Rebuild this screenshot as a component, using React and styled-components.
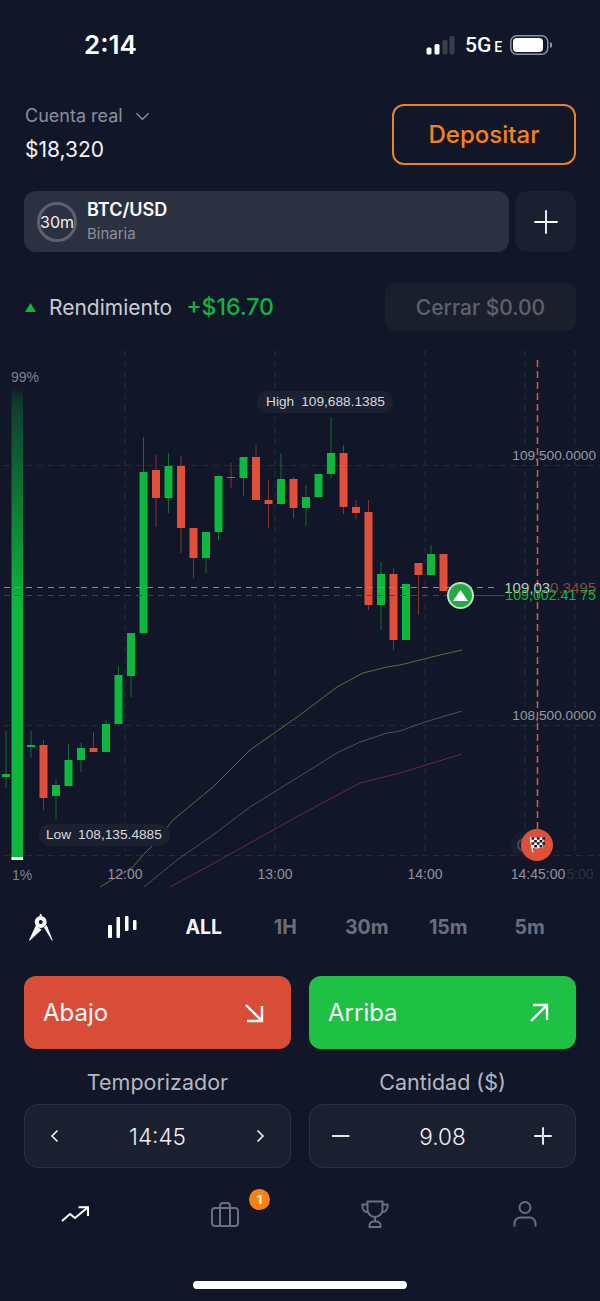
import React from 'react';
import styled, {createGlobalStyle} from 'styled-components';

const UP = '#0db83c';
const DOWN = '#df4f39';

// x, open-top, body-bottom, wick-top, wick-bottom, colour flag
const candles = [
    [6, 774, 777, 731, 788, 1], [31, 745, 747, 731, 758, 1], [43.5, 745, 798, 740, 810, 0],
    [56, 785, 796, 780, 819, 1], [68.5, 760, 786, 744, 786, 1], [81, 748, 760, 743, 772, 1],
    [93.5, 748, 752, 732, 752, 0], [106, 724, 752, 720, 752, 1], [118.5, 675, 724, 666, 724, 1],
    [131, 633, 676, 633, 697, 1], [143.5, 472, 633, 437, 633, 1], [156, 470, 498, 455, 527, 0],
    [168.5, 466, 498, 453, 513, 1], [181, 466, 528, 456, 553, 0], [193.5, 528, 558, 528, 578, 0],
    [206, 532, 558, 532, 573, 1], [218.5, 476, 532, 476, 540, 1], [231, 477, 478, 463, 488, 0],
    [243.5, 457, 478, 457, 496, 1], [256, 457, 500, 445, 500, 0], [268.5, 500, 504, 480, 528, 0],
    [281, 479, 504, 453, 504, 1], [293.5, 479, 508, 477, 518, 0], [306, 497, 508, 485, 526, 1],
    [318.5, 474, 497, 474, 497, 1], [331, 453, 474, 417, 479, 1], [343.5, 453, 507, 445, 514, 0],
    [356, 507, 513, 500, 519, 0], [368.5, 512, 605, 500, 610, 0], [381, 574, 605, 562, 630, 1],
    [393.5, 574, 640, 568, 650, 0], [406, 584, 640, 584, 640, 1], [418.5, 563, 575, 563, 615, 0],
    [431, 554, 575, 545, 575, 1], [443.5, 554, 591, 554, 591, 0],
];

const yellowLine = '100,887 133,867 143,855 152,846 173,820 213,787 250,750 300,715 337,687 363,673 387,667 400,665 440,655 462,650';
const grayLine = '144,887 177,860 213,835 250,807 300,776 337,753 360,742 387,733 400,731 425,722 462,711';
const redLine = '170,887 207,867 300,815 360,783 400,773 462,754';

const GlobalStyle = createGlobalStyle`
    html, body {
        margin: 0;
        padding: 0;
        background: #111729;
    }
    body {
        font-family: Inter, "Noto Sans", sans-serif;
        color: #fff;
    }
`;

const Page = styled.div`
    width: 600px;
    height: 1301px;
    overflow: hidden;
    background: #111729;
`;

const StatusBar = styled.div`
    height: 104px;
    box-sizing: border-box;
    display: flex;
    justify-content: space-between;
    padding: 30px 47px 0 84px;
`;

const Clock = styled.div`
    font-size: 26px;
    font-weight: 600;
    line-height: 30px;
`;

const StatusIcons = styled.div`
    display: flex;
    align-items: center;
    height: 30px;
`;

const Network = styled.div`
    font-family: Roboto, sans-serif;
    font-size: 21px;
    font-weight: 500;
    margin: 0 9px 0 10px;
    width: 36px;
    display: flex;
    align-items: baseline;
    small {
        font-size: 14px;
        margin-left: 3px;
    }
`;

const HeaderRow = styled.div`
    display: flex;
    justify-content: space-between;
    padding: 0 24px;
    height: 61px;
`;

const Account = styled.div`
    display: flex;
    flex-direction: column;
    padding-left: 1px;
`;

const AccountName = styled.div`
    font-size: 18px;
    line-height: 24px;
    color: #8b8f99;
    display: flex;
    align-items: center;
    gap: 12px;
`;

const Balance = styled.div`
    font-size: 21px;
    line-height: 28px;
    margin-top: 8px;
    color: #f1f2f4;
`;

const DepositButton = styled.div`
    width: 184px;
    box-sizing: border-box;
    border: 2px solid #ee8124;
    border-radius: 12px;
    color: #f7821b;
    font-size: 24px;
    font-weight: 500;
    display: flex;
    align-items: center;
    justify-content: center;
`;

const AssetRow = styled.div`
    display: flex;
    gap: 6px;
    padding: 0 24px;
    margin-top: 26px;
    height: 61px;
`;

const AssetCard = styled.div`
    flex: 1;
    background: #2c3142;
    border-radius: 12px;
    display: flex;
    align-items: center;
    gap: 10px;
    padding-left: 13px;
`;

const TimerRing = styled.div`
    width: 40px;
    height: 40px;
    box-sizing: border-box;
    border: 3px solid #5c6172;
    border-radius: 50%;
    font-size: 16px;
    display: flex;
    align-items: center;
    justify-content: center;
    white-space: nowrap;
    color: #eceef1;
`;

const AssetName = styled.div`
    font-size: 18px;
    font-weight: 600;
    line-height: 22px;
`;

const AssetType = styled.div`
    font-size: 15px;
    line-height: 20px;
    margin-top: 3px;
    color: #8b8f99;
`;

const AddButton = styled.div`
    width: 61px;
    background: #1b2030;
    border-radius: 12px;
    display: flex;
    align-items: center;
    justify-content: center;
`;

const PerformanceRow = styled.div`
    display: flex;
    align-items: center;
    padding: 0 24px 0 25px;
    margin-top: 31px;
    height: 48px;
`;

const PerformanceLabel = styled.div`
    font-size: 21px;
    color: #c9ccd3;
    margin-left: 13px;
`;

const PerformanceValue = styled.div`
    font-size: 23px;
    font-weight: 500;
    color: #12b33f;
    margin-left: 14px;
`;

const CloseButton = styled.div`
    margin-left: auto;
    width: 191px;
    height: 48px;
    background: #1b1f2c;
    border-radius: 10px;
    color: #5e626e;
    font-size: 21px;
    font-weight: 500;
    display: flex;
    align-items: center;
    justify-content: center;
`;

const Chart = styled.div`
    position: relative;
    height: 542px;
    margin-top: 14px;
    overflow: hidden;
    font-family: "Liberation Sans", Arial, sans-serif;
    font-size: 13.7px;
    line-height: 16px;
    svg {
        display: block;
    }
`;

// all overlay positions below are chart y = page y - 345
const Pill = styled.div`
    position: absolute;
    left: ${p => p.$x}px;
    top: ${p => p.$y}px;
    height: 22px;
    padding: 0 8px 0 ${p => p.$pad}px;
    display: flex;
    align-items: center;
    gap: 7px;
    border-radius: 11px;
    background: #1c2131;
    color: #d7d9de;
    white-space: nowrap;
`;

const PriceLabel = styled.div`
    position: absolute;
    right: 4px;
    top: ${p => p.$y}px;
    color: ${p => p.$color || '#9699a2'};
    font-size: ${p => p.$size || 13.7}px;
    white-space: nowrap;
`;

const PriceHead = styled.span`
    color: #c4c6cc;
`;

const TimeLabel = styled.div`
    position: absolute;
    left: ${p => p.$x}px;
    top: 521px;
    transform: translateX(-50%);
    color: ${p => p.$color || '#8f929c'};
    font-size: 14px;
    white-space: nowrap;
`;

const Percent = styled.div`
    position: absolute;
    left: ${p => p.$x}px;
    top: ${p => p.$y}px;
    color: #7f828c;
    font-size: 14px;
`;

const Marker = styled.div`
    position: absolute;
    left: 447px;
    top: 237px;
    width: 27px;
    height: 27px;
    box-sizing: border-box;
    border: 2px solid #b5e2bf;
    border-radius: 50%;
    background: #27a846;
    display: flex;
    align-items: center;
    justify-content: center;
`;

const FinishFlag = styled.div`
    position: absolute;
    left: 521px;
    top: 484px;
    width: 32px;
    height: 32px;
    border-radius: 50%;
    background: #df4f39;
    display: flex;
    align-items: center;
    justify-content: center;
`;

const GhostCircle = styled.div`
    position: absolute;
    left: 511px;
    top: 486px;
    width: 28px;
    height: 28px;
    box-sizing: border-box;
    border-radius: 50%;
    background: #181d2d;
    &::before {
        content: '';
        position: absolute;
        left: 6px;
        top: 7px;
        width: 9px;
        height: 14px;
        box-sizing: border-box;
        border: 2px solid #41465a;
        border-right: none;
        border-radius: 8px 0 0 8px;
    }
`;

const Toolbar = styled.div`
    height: 80px;
    display: grid;
    grid-template-columns: repeat(7, 81.5px);
    align-items: center;
    justify-items: center;
`;

const RangeTab = styled.div`
    font-size: 19.5px;
    font-weight: 700;
    color: ${p => (p.$active ? '#f4f5f7' : '#6b6f7b')};
`;

const ActionRow = styled.div`
    display: grid;
    grid-template-columns: 1fr 1fr;
    gap: 18px;
    padding: 0 24px;
    margin-top: 9px;
`;

const TradeButton = styled.div`
    height: 73px;
    border-radius: 12px;
    background: ${p => (p.$up ? '#1fc144' : '#d94c38')};
    display: flex;
    align-items: center;
    justify-content: space-between;
    padding: 0 27px 0 19px;
    font-size: 24px;
    font-weight: 400;
    color: #f7f8f8;
`;

const Field = styled.div`
    display: flex;
    flex-direction: column;
    align-items: center;
`;

const FieldLabel = styled.div`
    height: 55px;
    box-sizing: border-box;
    padding-top: 10px;
    display: flex;
    align-items: center;
    font-size: 21.5px;
    color: #b4b7be;
`;

const Stepper = styled.div`
    width: 100%;
    height: 64px;
    box-sizing: border-box;
    background: #1b2030;
    border: 1px solid #2b3040;
    border-radius: 14px;
    display: flex;
    align-items: center;
    justify-content: space-between;
    padding: 0 22px;
    font-size: 22.5px;
    font-weight: 300;
    color: #eef0f2;
`;

const FieldRow = styled(ActionRow)`
    margin-top: 0;
`;

const BottomNav = styled.div`
    display: grid;
    grid-template-columns: repeat(4, 150px);
    justify-items: center;
    align-items: center;
    height: 64px;
    margin-top: 14px;
`;

const NavItem = styled.div`
    position: relative;
    display: flex;
`;

const Badge = styled.div`
    position: absolute;
    left: 38px;
    top: -13px;
    width: 21px;
    height: 21px;
    border-radius: 50%;
    background: #f7820f;
    color: #fff;
    font-size: 12px;
    font-weight: 700;
    display: flex;
    align-items: center;
    justify-content: center;
`;

const HomeIndicator = styled.div`
    width: 214px;
    height: 8px;
    border-radius: 4px;
    background: #fff;
    margin: 35px auto 0;
`;

function SignalIcon() {
    return (
        <svg width="29" height="19" viewBox="0 0 29 19">
            <rect x="0.5" y="11.5" width="5" height="7" rx="1.5" fill="#fff"/>
            <rect x="8.5" y="8" width="5" height="10.5" rx="1.5" fill="#fff"/>
            <rect x="16.5" y="4" width="5" height="14.5" rx="1.5" fill="#3a3f50"/>
            <rect x="23.5" y="0" width="5" height="18.5" rx="1.5" fill="#3a3f50"/>
        </svg>
    );
}

function BatteryIcon() {
    return (
        <svg width="43" height="20" viewBox="0 0 43 20">
            <rect x="0.75" y="0.75" width="37" height="18.5" rx="6" fill="none" stroke="#8f93a0" strokeWidth="1.5"/>
            <rect x="3" y="3" width="30" height="14" rx="4" fill="#fff"/>
            <path d="M40 7c1.6.5 2.2 1.6 2.2 3s-.6 2.5-2.2 3z" fill="#8f93a0"/>
        </svg>
    );
}

function CompassIcon() {
    return (
        <svg width="24" height="27" viewBox="0 0 24 27" fill="#fff">
            <path d="M11 0h1.4l.6 2.5h-2.600z"/>
            <path fillRule="evenodd" d="M11.7 2a6 6 0 1 1 0 12 6 6 0 0 1 0-12zm0 4a2 2 0 1 0 0 4 2 2 0 0 0 0-4z"/>
            <path d="M6.8 11.5l5.800 4.300L.6 26.800 0 26.300z"/>
            <path d="M15 13.500l2.700-2.600 6 15.300-.6.500z"/>
        </svg>
    );
}

function CandlesIcon() {
    return (
        <svg width="30" height="23" viewBox="0 0 30 23" fill="#fff">
            <rect x="1" y="9" width="4" height="13" rx="1"/>
            <rect x="9.5" y="1" width="3.5" height="21" rx="1"/>
            <rect x="18" y="0" width="3.5" height="15" rx="1"/>
            <rect x="26" y="4" width="3.5" height="10" rx="1"/>
        </svg>
    );
}

function ArrowIcon({up}) {
    return (
        <svg width="20" height="20" viewBox="0 0 20 20" fill="none" stroke="#fff" strokeWidth="2.4">
            {up
                ? <path d="M2 18L18 2M4 2h14v15"/>
                : <path d="M2 2l16 16M18 3v15H3"/>}
        </svg>
    );
}

function Glyph({size = 16, width = 1.8, color = '#f0f1f3', d}) {
    return (
        <svg width={size} height={size} viewBox="0 0 16 16" fill="none" stroke={color} strokeWidth={width}>
            <path d={d}/>
        </svg>
    );
}

function FlagIcon() {
    const squares = [];
    for (let r = 0; r < 4; r++) {
        for (let c = 0; c < 5; c++) {
            if ((r + c) % 2 === 0) {
                squares.push(<rect key={r + '-' + c} x={4.5 + c * 2.7} y={2.2 + r * 2.5 + (c % 2) * 0.3} width="2.7" height="2.5" fill="#1b1b1f"/>);
            }
        }
    }
    return (
        <svg width="20" height="20" viewBox="0 0 20 20">
            <path d="M3.2 2.2c3-1 5.5 1 8 .4 2-.4 3.5-.8 5.8-.2l-1.2 10.400c-2.600-.4-4 .4-6 .6-2.400.2-3.600-1-5.200-.4z" fill="#fff"/>
            <path d="M3.2 2.2l2.600 15" stroke="#fff" strokeWidth="1.3"/>
            {squares}
        </svg>
    );
}

function CandleChart() {
    return (
        <svg width="600" height="542" viewBox="0 345 600 542">
            <defs>
                <linearGradient id="gauge" x1="0" y1="387" x2="0" y2="610" gradientUnits="userSpaceOnUse">
                    <stop offset="0" stopColor={UP} stopOpacity="0"/>
                    <stop offset="0.08" stopColor={UP} stopOpacity="0.25"/>
                    <stop offset="1" stopColor={UP}/>
                </linearGradient>
            </defs>

            <g stroke="#262b3c" strokeWidth="1" strokeDasharray="6 5">
                {[125, 275, 425, 525, 575].map(x => <line key={x} x1={x} x2={x} y1="350" y2="855"/>)}
                {[465.5, 725.5, 855.5].map(y => <line key={y} x1="4" x2="600" y1={y} y2={y}/>)}
            </g>

            <polyline points={yellowLine} fill="none" stroke="#67683f" strokeWidth="1"/>
            <polyline points={grayLine} fill="none" stroke="#4a5068" strokeWidth="1"/>
            <polyline points={redLine} fill="none" stroke="#6b2b3a" strokeWidth="1"/>

            <rect x="11.5" y="387" width="11.5" height="470" fill="url(#gauge)"/>
            <rect x="11.5" y="857" width="11.5" height="3" fill="#fff"/>

            {candles.map(([x, top, bottom, wickTop, wickBottom, up]) => {
                const color = up ? UP : DOWN;
                return (
                    <g key={x} fill={color}>
                        <rect x={x - 0.5} y={wickTop} width="1" height={wickBottom - wickTop} opacity="0.55"/>
                        <rect x={x - 4} y={top} width="8" height={Math.max(bottom - top, 1)}/>
                    </g>
                );
            })}

            <line x1="4" x2="495" y1="587.5" y2="587.5" stroke="#868a96" strokeWidth="1" strokeDasharray="6 5"/>
            <line x1="4" x2="450" y1="595.5" y2="595.5" stroke="#41465a" strokeWidth="1" strokeDasharray="6 5"/>
            <line x1="472" x2="505" y1="595.5" y2="595.5" stroke="#1f5e3d" strokeWidth="1"/>
            <line x1="537.5" x2="537.5" y1="360" y2="830" stroke="#e5533f" strokeWidth="1.5" strokeDasharray="7 4"/>
        </svg>
    );
}

export default function App() {
    return (
        <Page>
            <GlobalStyle/>
            <StatusBar>
                <Clock>2:14</Clock>
                <StatusIcons>
                    <SignalIcon/>
                    <Network>5G<small>E</small></Network>
                    <BatteryIcon/>
                </StatusIcons>
            </StatusBar>

            <HeaderRow>
                <Account>
                    <AccountName>
                        Cuenta real
                        <Glyph size={15} width={1.4} color="#8b8f99" d="M1.5 4.5L8 11l6.5-6.5"/>
                    </AccountName>
                    <Balance>$18,320</Balance>
                </Account>
                <DepositButton>Depositar</DepositButton>
            </HeaderRow>

            <AssetRow>
                <AssetCard>
                    <TimerRing>30m</TimerRing>
                    <div>
                        <AssetName>BTC/USD</AssetName>
                        <AssetType>Binaria</AssetType>
                    </div>
                </AssetCard>
                <AddButton>
                    <Glyph size={26} width={1.1} color="#fff" d="M8 .8v14.4M.8 8h14.4"/>
                </AddButton>
            </AssetRow>

            <PerformanceRow>
                <svg width="11" height="9" viewBox="0 0 11 9"><path d="M5.5 0L11 9H0z" fill="#12b33f"/></svg>
                <PerformanceLabel>Rendimiento</PerformanceLabel>
                <PerformanceValue>+$16.70</PerformanceValue>
                <CloseButton>Cerrar $0.00</CloseButton>
            </PerformanceRow>

            <Chart>
                <CandleChart/>
                <Percent $x={11} $y={24}>99%</Percent>
                <Percent $x={12} $y={522}>1%</Percent>
                <Pill $x={257} $y={46} $pad={9}><span>High</span><span>109,688.1385</span></Pill>
                <Pill $x={39} $y={479} $pad={7}><span>Low</span><span>108,135.4885</span></Pill>
                <PriceLabel $y={103}>109,500.0000</PriceLabel>
                <PriceLabel $y={363}>108,500.0000</PriceLabel>
                <PriceLabel $y={235} $size={15} $color="#8e4340"><PriceHead>109,03</PriceHead>0.3495</PriceLabel>
                <PriceLabel $y={242} $size={14.2} $color={UP}>109,002.41 75</PriceLabel>
                <Marker>
                    <svg width="15" height="11" viewBox="0 0 15 11"><path d="M7.5 0L15 11H0z" fill="#fff"/></svg>
                </Marker>
                <GhostCircle/>
                <FinishFlag><FlagIcon/></FinishFlag>
                <TimeLabel $x={125}>12:00</TimeLabel>
                <TimeLabel $x={275}>13:00</TimeLabel>
                <TimeLabel $x={425}>14:00</TimeLabel>
                <TimeLabel $x={580} $color="#2b3040">5:00</TimeLabel>
                <TimeLabel $x={538}>14:45:00</TimeLabel>
            </Chart>

            <Toolbar>
                <CompassIcon/>
                <CandlesIcon/>
                <RangeTab $active>ALL</RangeTab>
                <RangeTab>1H</RangeTab>
                <RangeTab>30m</RangeTab>
                <RangeTab>15m</RangeTab>
                <RangeTab>5m</RangeTab>
            </Toolbar>

            <ActionRow>
                <TradeButton>Abajo<ArrowIcon/></TradeButton>
                <TradeButton $up>Arriba<ArrowIcon up/></TradeButton>
            </ActionRow>

            <FieldRow>
                <Field>
                    <FieldLabel>Temporizador</FieldLabel>
                    <Stepper>
                        <Glyph size={16} width={1.6} d="M10.5 2.5L5 8l5.5 5.5"/>
                        14:45
                        <Glyph size={16} width={1.6} d="M5.5 2.5L11 8l-5.5 5.5"/>
                    </Stepper>
                </Field>
                <Field>
                    <FieldLabel>Cantidad ($)</FieldLabel>
                    <Stepper>
                        <Glyph size={20} width={1.5} d="M0 8h14"/>
                        9.08
                        <Glyph size={20} width={1.5} d="M8 1v14M1 8h14"/>
                    </Stepper>
                </Field>
            </FieldRow>

            <BottomNav>
                <NavItem>
                    <svg width="28" height="16" viewBox="0 0 28 16" fill="none" stroke="#fff" strokeWidth="2">
                        <path d="M1 15l8-7 5 4 12-10M17.5 1.2H27V10"/>
                    </svg>
                </NavItem>
                <NavItem>
                    <svg width="28" height="25" viewBox="0 0 28 25" fill="none" stroke="#6a6f7c" strokeWidth="2">
                        <rect x="1" y="6" width="26" height="18" rx="3"/>
                        <path d="M9 24V4a3 3 0 0 1 3-3h4a3 3 0 0 1 3 3v20"/>
                    </svg>
                    <Badge>1</Badge>
                </NavItem>
                <NavItem>
                    <svg width="28" height="28" viewBox="0 0 28 28" fill="none" stroke="#6a6f7c" strokeWidth="2">
                        <path d="M6.5 1.5h15v8a7.5 7.5 0 0 1-15 0z"/>
                        <path d="M6.5 4.5H1.5V7a5 5 0 0 0 5.5 5M21.5 4.5h5V7a5 5 0 0 1-5.5 5"/>
                        <path d="M14 17v4.5"/>
                        <path d="M8.5 27v-1.5a4 4 0 0 1 4-4h3a4 4 0 0 1 4 4V27z"/>
                    </svg>
                </NavItem>
                <NavItem>
                    <svg width="24" height="26" viewBox="0 0 24 26" fill="none" stroke="#6a6f7c" strokeWidth="2">
                        <circle cx="12" cy="6.5" r="5.5"/>
                        <path d="M1.5 25.5v-3a6 6 0 0 1 6-6h9a6 6 0 0 1 6 6v3"/>
                    </svg>
                </NavItem>
            </BottomNav>

            <HomeIndicator/>
        </Page>
    );
}
